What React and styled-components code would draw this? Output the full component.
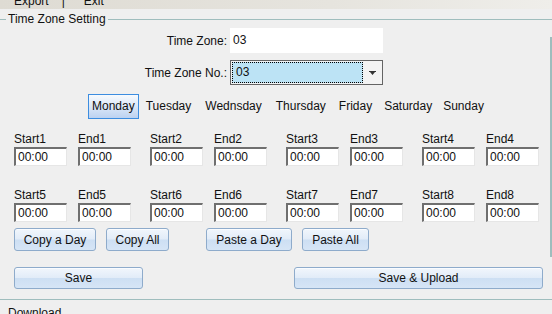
import styled, { createGlobalStyle } from 'styled-components';

const GlobalStyle = createGlobalStyle`
  html, body {
    margin: 0;
    padding: 0;
    background: #efefef;
    width: 552px;
    height: 314px;
    overflow: hidden;
    font-family: "Liberation Sans", Arial, sans-serif;
    font-size: 12px;
    color: #111;
  }
`;

const MenuBar = styled.div`
  height: 9px;
  overflow: hidden;
  background: linear-gradient(90deg, #dedbd3 0%, #e6e4de 60%, #efeeea 100%);
  display: flex;
  padding-left: 14px;
`;

const MenuItem = styled.span`
  margin-top: -6px;
  line-height: 14px;
  margin-right: ${(p) => p.$gap}px;
`;

const Panel = styled.section`
  margin-top: 3px;
  display: flex;
  flex-direction: column;
`;

const LegendRow = styled.div`
  display: flex;
  align-items: center;
  height: 14px;
`;

const LegendLine = styled.div`
  height: 1px;
  background: #9fbdbd;
  width: ${(p) => (p.$grow ? 'auto' : '6px')};
  flex: ${(p) => (p.$grow ? 1 : 'none')};
`;

const LegendText = styled.span`
  padding: 0 2px;
  line-height: 14px;
`;

const Body = styled.div`
  display: flex;
`;

const Content = styled.div`
  flex: 1;
  display: flex;
  flex-direction: column;
`;

const SideEdge = styled.div`
  width: 0;
  margin-top: 11px;
  height: 220px;
  border-left: 2px solid #9fbdbd;
`;

const FormRow = styled.div`
  display: grid;
  grid-template-columns: 227px 153px;
  column-gap: 3px;
  align-items: center;
  height: 25px;
  margin-top: ${(p) => p.$top}px;
`;

const FormLabel = styled.label`
  text-align: right;
`;

const PlainBox = styled.div`
  height: 25px;
  background: #fff;
  padding-left: 3px;
  line-height: 25px;
`;

const Combo = styled.div`
  height: 25px;
  box-sizing: border-box;
  border: 1px solid #646464;
  background: #f3f3f3;
  display: flex;
  align-items: center;
  padding: 1px;
`;

const ComboValue = styled.div`
  width: 131px;
  height: 21px;
  box-sizing: border-box;
  background: #bce3f5;
  border: 1px dotted #000;
  padding-left: 3px;
  line-height: 19px;
`;

const ComboArrow = styled.div`
  flex: 1;
  display: flex;
  justify-content: center;
  align-items: center;
`;

const Tabs = styled.div`
  display: flex;
  align-items: center;
  margin-top: 9px;
  padding-left: 88px;
  height: 25px;
`;

const Tab = styled.div`
  height: 25px;
  box-sizing: border-box;
  line-height: 23px;
  padding: 0 ${(p) => p.$pr}px 0 ${(p) => p.$pl}px;
  border: 1px solid ${(p) => (p.$active ? '#3c8de0' : 'transparent')};
  background: ${(p) =>
    p.$active ? 'linear-gradient(#f7fafd, #dbe7f7 50%, #bcd2f1)' : 'transparent'};
`;

const FieldBlock = styled.div`
  display: flex;
  gap: 19px;
  padding-left: 14px;
  margin-top: ${(p) => p.$top}px;
`;

const Pair = styled.div`
  display: flex;
  gap: 11px;
`;

const Field = styled.div`
  display: flex;
  flex-direction: column;
  width: 53px;
`;

const FieldLabel = styled.span`
  line-height: 15px;
  height: 15px;
`;

const TimeBox = styled.div`
  height: 19px;
  box-sizing: border-box;
  background: #fff;
  border-top: 2px solid #6f6f6f;
  border-left: 2px solid #6f6f6f;
  border-right: 1px solid #e6e6e6;
  border-bottom: 1px solid #e6e6e6;
  padding-left: 2px;
  line-height: 16px;
`;

const ButtonRow = styled.div`
  display: flex;
  padding-left: 14px;
  margin-top: ${(p) => p.$top}px;
  gap: ${(p) => p.$gap}px;
`;

const ButtonGroup = styled.div`
  display: flex;
  gap: 10px;
`;

const Button = styled.button`
  width: ${(p) => p.$w}px;
  height: ${(p) => p.$h}px;
  padding: 0;
  font: inherit;
  color: #111;
  border: 1px solid #8eabcb;
  border-radius: 3px;
  background: linear-gradient(#f1f6fc 0%, #e2ecf8 48%, #cddff3 52%, #d6e5f6 100%);
  box-shadow: inset 0 1px 0 #fafcff;
`;

const BottomLine = styled.div`
  margin-top: 10px;
  height: 1px;
  background: #9fbdbd;
`;

const Footer = styled.div`
  padding-left: 8px;
  margin-top: 6px;
  line-height: 14px;
`;

function ArrowIcon() {
  return (
    <svg width="7" height="4" viewBox="0 0 7 4">
      <path d="M0 0h7v1H0z M1 1h5L3.5 4z" fill="#333" />
    </svg>
  );
}

// [label, left padding, right padding]
const days = [
  ['Monday', 3, 3],
  ['Tuesday', 6, 6],
  ['Wednsday', 6, 6],
  ['Thursday', 6, 5],
  ['Friday', 6, 4],
  ['Saturday', 6, 3],
  ['Sunday', 6, 6],
];

function FieldRow({ from, top }) {
  const groups = [0, 1, 2, 3].map((g) => from + g);
  return (
    <FieldBlock $top={top}>
      {groups.map((n) => (
        <Pair key={n}>
          <Field>
            <FieldLabel>Start{n}</FieldLabel>
            <TimeBox>00:00</TimeBox>
          </Field>
          <Field>
            <FieldLabel>End{n}</FieldLabel>
            <TimeBox>00:00</TimeBox>
          </Field>
        </Pair>
      ))}
    </FieldBlock>
  );
}

function App() {
  return (
    <>
      <GlobalStyle />
      <MenuBar>
        <MenuItem $gap={13}>Export</MenuItem>
        <MenuItem $gap={19}>|</MenuItem>
        <MenuItem $gap={0}>Exit</MenuItem>
      </MenuBar>
      <Panel>
        <LegendRow>
          <LegendLine />
          <LegendText>Time Zone Setting</LegendText>
          <LegendLine $grow />
        </LegendRow>
        <Body>
          <Content>
            <FormRow $top={2}>
              <FormLabel>Time Zone:</FormLabel>
              <PlainBox>03</PlainBox>
            </FormRow>
            <FormRow $top={7}>
              <FormLabel>Time Zone No.:</FormLabel>
              <Combo>
                <ComboValue>03</ComboValue>
                <ComboArrow>
                  <ArrowIcon />
                </ComboArrow>
              </Combo>
            </FormRow>
            <Tabs>
              {days.map(([d, pl, pr], i) => (
                <Tab key={d} $active={i === 0} $pl={pl} $pr={pr}>
                  {d}
                </Tab>
              ))}
            </Tabs>
            <FieldRow from={1} top={13} />
            <FieldRow from={5} top={22} />
            <ButtonRow $top={6} $gap={37}>
              <ButtonGroup>
                <Button $w={82} $h={23}>Copy a Day</Button>
                <Button $w={63} $h={23}>Copy All</Button>
              </ButtonGroup>
              <ButtonGroup>
                <Button $w={86} $h={23}>Paste a Day</Button>
                <Button $w={67} $h={23}>Paste All</Button>
              </ButtonGroup>
            </ButtonRow>
            <ButtonRow $top={16} $gap={151}>
              <Button $w={129} $h={22}>Save</Button>
              <Button $w={249} $h={22}>Save &amp; Upload</Button>
            </ButtonRow>
          </Content>
          <SideEdge />
        </Body>
        <BottomLine />
        <Footer>Download</Footer>
      </Panel>
    </>
  );
}

export default App;
